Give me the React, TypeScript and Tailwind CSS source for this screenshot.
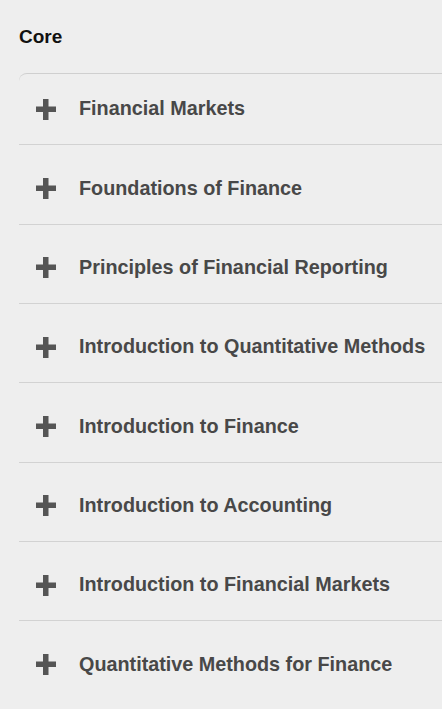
const courses = [
  'Financial Markets',
  'Foundations of Finance',
  'Principles of Financial Reporting',
  'Introduction to Quantitative Methods',
  'Introduction to Finance',
  'Introduction to Accounting',
  'Introduction to Financial Markets',
  'Quantitative Methods for Finance',
];

function PlusIcon() {
  return (
    <svg width="20" height="21" viewBox="0 0 20 21" className="shrink-0">
      <rect x="0" y="7.5" width="20" height="5.5" fill="#555555" />
      <rect x="7" y="0" width="5.5" height="21" fill="#555555" />
    </svg>
  );
}

export default function App() {
  return (
    <div className="min-h-[709px] w-full bg-[#eeeeee] font-['Liberation_Sans',Arial,sans-serif]">
      <div className="pl-[19px]">
        <h2 className="pt-[25px] pb-[24px] text-[19px] leading-[24px] font-bold text-[#111111]">Core</h2>
        <div className="rounded-tl-[8px] border-t border-[#cfcfcf]">
          {courses.map((c, i) => (
            <div
              key={c}
              className={`${i === courses.length - 1 ? '' : 'border-b border-[#d2d2d2]'} ${i === 0 ? '' : 'pt-2'}`}
            >
              <button
                type="button"
                className="flex h-[70.33px] w-full items-center gap-[23px] pl-[17px] text-left"
              >
                <PlusIcon />
                <span className="text-[19.8px] font-bold text-[#484848]">{c}</span>
              </button>
            </div>
          ))}
        </div>
      </div>
    </div>
  );
}
